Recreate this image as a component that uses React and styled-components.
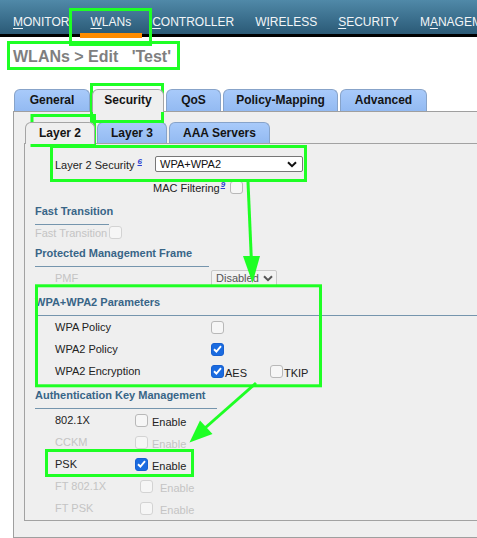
import React from 'react'
import styled, { createGlobalStyle, css } from 'styled-components'

const GlobalStyle = createGlobalStyle`
    html, body {
        margin: 0;
        padding: 0;
        background: #fff;
        overflow: hidden;
    }
    body {
        font-family: "Liberation Sans", Arial, sans-serif;
    }
`;

const Page = styled.div`
    position: relative;
    width: 477px;
    height: 538px;
    overflow: hidden;
    background: #fff;
`;

const NavBar = styled.nav`
    display: flex;
    align-items: flex-end;
    height: 34px;
    padding-left: 2.5px;
    background: linear-gradient(180deg, #5089a8 0%, #3b6f8d 55%, #2b5a76 100%);
    border-bottom: 3px solid #000;
`;

const NavItem = styled.div`
    position: relative;
    flex: none;
    padding: 0 10.5px 5px;
    font-size: 12px;
    line-height: 14px;
    color: #f2f5f7;
    white-space: nowrap;

    u {
        text-decoration-thickness: 1px;
        text-underline-offset: 2px;
    }

    ${p => p.$active && css`
        &::after {
            content: '';
            position: absolute;
            left: 0;
            right: 0;
            bottom: -4px;
            height: 5px;
            background: #ff8c00;
        }
    `}
`;

const Content = styled.div`
    padding-left: 13px;
`;

const Title = styled.h1`
    margin: 0;
    padding-top: 11px;
    font-size: 16px;
    line-height: 18px;
    font-weight: bold;
    color: #7f7f7f;
    white-space: pre;
`;

const TabRow = styled.div`
    display: flex;
    align-items: flex-end;
    gap: 2px;
    margin: ${p => p.$top}px 0 0 1px;
`;

const Tab = styled.div`
    box-sizing: border-box;
    flex: none;
    width: ${p => p.$w}px;
    height: ${p => p.$h}px;
    border: 1px solid #87a3c9;
    border-bottom: none;
    border-radius: 6px 6px 0 0;
    background: linear-gradient(180deg, #a8cafa 0%, #93baf2 100%);
    font-size: 12px;
    font-weight: bold;
    line-height: ${p => p.$h - 1}px;
    text-align: center;
    color: #141414;

    ${p => p.$active && css`
        position: relative;
        z-index: 1;
        height: ${p.$h + 1}px;
        margin-bottom: -1px;
        border-color: #a5a5a5;
        background: #efefef;
    `}
`;

const Panel = styled.div`
    box-sizing: border-box;
    width: 480px;
    height: 427px;
    padding: 10px 0 0 10px;
    border: 1px solid #9f9f9f;
    border-right: none;
    background: #efefef;
`;

const InnerPanel = styled.div`
    box-sizing: border-box;
    width: 470px;
    height: 378px;
    padding: 9px 0 0 10px;
    border: 1px solid #a2a2a2;
    border-right: none;
    background: #efefef;
`;

const Row = styled.div`
    display: flex;
    align-items: center;
    height: ${p => p.$h || 22}px;
    margin-top: ${p => p.$mt || 0}px;
    padding-left: ${p => p.$indent ?? 20}px;
    font-size: 11px;
    color: #222;
    white-space: nowrap;
`;

const Label = styled.span`
    flex: none;
    width: ${p => (p.$w ? `${p.$w}px` : 'auto')};
    margin-right: ${p => p.$mr || 0}px;
    color: ${p => (p.$disabled ? '#c4c4c4' : '#222')};
`;

const Note = styled.sup`
    margin-left: ${p => p.$ml ?? 3}px;
    font-size: 8px;
    font-weight: bold;
    font-style: italic;
    color: #2a3fd0;
    text-decoration: underline;
`;

const Heading = styled.div`
    width: ${p => (p.$w ? `${p.$w}px` : 'auto')};
    padding: 6px 0;
    font-size: 11px;
    font-weight: bold;
    line-height: 14px;
    color: #386587;
    border-bottom: 1px solid #7595ad;
    white-space: nowrap;
`;

const Box = styled.span`
    display: inline-flex;
    align-items: center;
    justify-content: center;
    flex: none;
    box-sizing: border-box;
    width: 13px;
    height: 13px;
    margin-left: ${p => p.$ml || 0}px;
    border: 1px solid ${p => (p.$disabled ? '#d3d3d3' : '#b8b8b8')};
    border-radius: 3px;
    background: #f6f6f6;

    ${p => p.$checked && css`
        border-color: #1760d0;
        background: #1a6be0;
    `}
`;

const Option = styled.span`
    padding-top: 4px;
    margin-left: ${p => p.$ml || 0}px;
    width: ${p => (p.$w ? `${p.$w}px` : 'auto')};
    color: ${p => (p.$disabled ? '#c4c4c4' : '#222')};
`;

const SelectBox = styled.div`
    display: flex;
    align-items: center;
    justify-content: space-between;
    box-sizing: border-box;
    flex: none;
    width: ${p => p.$w}px;
    height: ${p => p.$h}px;
    padding: 0 ${p => p.$pr}px 0 4px;
    border: 1px solid ${p => (p.$disabled ? '#c9c9c9' : '#777')};
    border-radius: 2px;
    background: ${p => (p.$disabled ? '#f2f2f2' : '#fff')};
    font-size: 11px;
    color: ${p => (p.$disabled ? '#555' : '#111')};
`;

const Overlay = styled.svg`
    position: absolute;
    left: 0;
    top: 0;
    pointer-events: none;
`;

function Check({ checked, disabled, ml }) {
    return (
        <Box $checked={checked} $disabled={disabled} $ml={ml}>
            {checked && (
                <svg width="9" height="8" viewBox="0 0 9 8">
                    <polyline points="1,4.2 3.4,6.5 8,1.2" fill="none" stroke="#fff" strokeWidth="1.9" />
                </svg>
            )}
        </Box>
    );
}

function Select({ value, width, height, pr, disabled }) {
    return (
        <SelectBox $w={width} $h={height} $pr={pr} $disabled={disabled}>
            <span>{value}</span>
            <svg width="10" height="7" viewBox="0 0 10 7">
                <polyline points="1,1.2 5,5.2 9,1.2" fill="none" stroke={disabled ? '#555' : '#111'} strokeWidth="2" />
            </svg>
        </SelectBox>
    );
}

const navItems = [
    ['M', 'ONITOR'],
    ['W', 'LANs'],
    ['C', 'ONTROLLER'],
    ['W', 'I', 'RELESS'],
    ['S', 'ECURITY'],
    ['M', 'A', 'NAGEMENT'],
];

const GREEN = '#1eff24';

function Annotations() {
    return (
        <Overlay width="477" height="538" viewBox="0 0 477 538">
            <g fill="none" stroke={GREEN} strokeWidth="3">
                <rect x="70.5" y="9.5" width="80" height="35" />
                <rect x="8.5" y="42.5" width="170" height="26" />
                <rect x="91.5" y="84.5" width="71" height="37" />
                <rect x="32" y="115.5" width="62.5" height="30" />
                <rect x="51.5" y="146.5" width="254" height="34" />
                <rect x="36.5" y="285.8" width="284" height="100" />
                <rect x="46.5" y="450.5" width="146" height="25" />
                <line x1="248" y1="182" x2="251.3" y2="258" />
                <line x1="256" y1="383" x2="205" y2="428" />
            </g>
            <g fill={GREEN}>
                <polygon points="243,256 260,256 252.5,283" />
                <polygon points="200,420.5 212.5,434 189.5,442.5" />
            </g>
        </Overlay>
    );
}

export default function App() {
    return (
        <Page>
            <GlobalStyle />
            <NavBar>
                {navItems.map((parts, i) => (
                    <NavItem key={i} $active={i === 1}>
                        {parts.length === 2 ? (
                            <><u>{parts[0]}</u>{parts[1]}</>
                        ) : (
                            <>{parts[0]}<u>{parts[1]}</u>{parts[2]}</>
                        )}
                    </NavItem>
                ))}
            </NavBar>
            <Content>
                <Title>{"WLANs > Edit   'Test'"}</Title>
                <TabRow $top={23}>
                    <Tab $w={76} $h={22}>General</Tab>
                    <Tab $w={72} $h={22} $active>Security</Tab>
                    <Tab $w={55} $h={22}>QoS</Tab>
                    <Tab $w={115} $h={22}>Policy-Mapping</Tab>
                    <Tab $w={87} $h={22}>Advanced</Tab>
                </TabRow>
                <Panel>
                    <TabRow $top={0}>
                        <Tab $w={70} $h={21} $active>Layer 2</Tab>
                        <Tab $w={70} $h={21}>Layer 3</Tab>
                        <Tab $w={101} $h={21}>AAA Servers</Tab>
                    </TabRow>
                    <InnerPanel>
                        <Row>
                            <Label $w={100}>Layer 2 Security<Note>6</Note></Label>
                            <Select value="WPA+WPA2" width={148} height={16} pr={5} />
                        </Row>
                        <Row $mt={1}>
                            <Label $w={98} />
                            <Label>MAC Filtering<Note $ml={1}>9</Note></Label>
                            <Check ml={5} />
                        </Row>

                        <Heading $w={74}>Fast Transition</Heading>
                        <Row $h={15} $indent={0}>
                            <Label $disabled $mr={2}>Fast Transition</Label>
                            <Check disabled />
                        </Row>

                        <Heading $w={174}>Protected Management Frame</Heading>
                        <Row>
                            <Label $w={156} $disabled>PMF</Label>
                            <Select value="Disabled" width={66} height={17} pr={3} disabled />
                        </Row>

                        <Heading>WPA+WPA2 Parameters</Heading>
                        <Row>
                            <Label $w={156}>WPA Policy</Label>
                            <Check />
                        </Row>
                        <Row>
                            <Label $w={156}>WPA2 Policy</Label>
                            <Check checked />
                        </Row>
                        <Row>
                            <Label $w={156}>WPA2 Encryption</Label>
                            <Check checked />
                            <Option $ml={1} $w={45}>AES</Option>
                            <Check />
                            <Option $ml={1}>TKIP</Option>
                        </Row>

                        <Heading $w={182}>Authentication Key Management</Heading>
                        <Row>
                            <Label $w={80}>802.1X</Label>
                            <Check />
                            <Option $ml={4}>Enable</Option>
                        </Row>
                        <Row>
                            <Label $w={80} $disabled>CCKM</Label>
                            <Check disabled />
                            <Option $ml={4} $disabled>Enable</Option>
                        </Row>
                        <Row>
                            <Label $w={80}>PSK</Label>
                            <Check checked />
                            <Option $ml={4}>Enable</Option>
                        </Row>
                        <Row>
                            <Label $w={85} $disabled>FT 802.1X</Label>
                            <Check disabled />
                            <Option $ml={7} $disabled>Enable</Option>
                        </Row>
                        <Row>
                            <Label $w={85} $disabled>FT PSK</Label>
                            <Check disabled />
                            <Option $ml={7} $disabled>Enable</Option>
                        </Row>
                    </InnerPanel>
                </Panel>
            </Content>
            <Annotations />
        </Page>
    );
}
